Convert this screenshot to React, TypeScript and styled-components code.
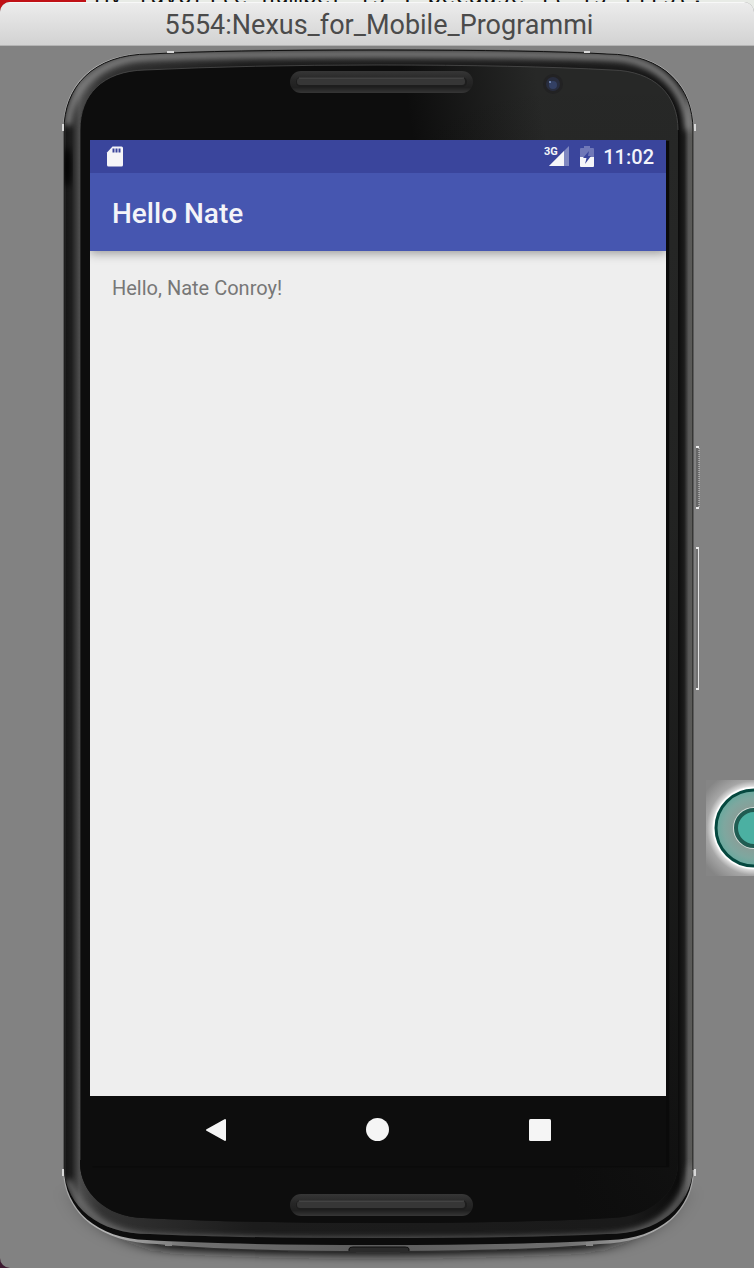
import React from "react";
import styled, { createGlobalStyle } from "styled-components";

const GlobalStyle = createGlobalStyle`
  *, *::before, *::after { box-sizing: border-box; }
  body { margin: 0; background: #e9e9e9; font-family: Roboto, "Liberation Sans", sans-serif; }
  p, h1 { margin: 0; }
`;

const Desktop = styled.div`
  display: flex;
  flex-direction: column;
  min-height: 100vh;
  overflow: hidden;
  background: linear-gradient(90deg, #c01116 0, #c01116 86px, #e8ebe6 86px) 0 0 / 100% 20px no-repeat #3c1a30;
`;

const BackdropStrip = styled.div`
  height: 2px;
  padding-left: 95px;
  overflow: hidden;
`;

const BackdropText = styled.p`
  margin-top: -16px;
  font: 23px/24px "DejaVu Sans Mono", "Liberation Mono", monospace;
  color: #111;
  white-space: nowrap;
`;

const EmulatorWindow = styled.main`
  display: flex;
  flex: 1;
  flex-direction: column;
  border-radius: 10px 10px 0 10px;
  overflow: hidden;
  background: #828282;
`;

const TitleBar = styled.header`
  display: flex;
  align-items: center;
  justify-content: center;
  height: 44px;
  border-top: 1px solid #f8f8f8;
  border-bottom: 1px solid #b4b4b4;
  padding: 2px 0 0 4px;
  background: linear-gradient(#ececec, #d2d2d2);
`;

const WindowTitle = styled.h1`
  font: 400 27px/32px Roboto, "Liberation Sans", sans-serif;
  color: #4b4b4b;
  white-space: nowrap;
`;

const Stage = styled.section`
  position: relative;
  display: flex;
  flex: 1;
  flex-direction: column;
  padding: 94px 88px 102px 90px;
`;

const DeviceArt = styled.svg`
  position: absolute;
  inset: 0;
  width: 100%;
  height: 100%;
`;

const Screen = styled.div`
  position: relative;
  display: flex;
  flex: 1;
  flex-direction: column;
  box-shadow: 3px 1px 1px #0a0a0a;
`;

const StatusBar = styled.div`
  display: flex;
  align-items: center;
  height: 33px;
  padding: 0 12px 0 16px;
  background: #3a459c;
  color: #f2f3fa;
`;

const StatusGroup = styled.div`
  display: flex;
  align-items: center;
  gap: 9px;
  margin-left: auto;
`;

const Clock = styled.time`
  font: 500 20px/24px Roboto, sans-serif;
`;

const AppBar = styled.div`
  position: relative;
  display: flex;
  align-items: center;
  height: 78px;
  padding: 4px 22px 0;
  background: #4656b0;
  color: #f4f4f8;
  box-shadow: 0 2px 10px rgba(0, 0, 0, 0.38);
  clip-path: inset(0 0 -20px 0);
`;

const AppTitle = styled.h2`
  margin: 0;
  font: 500 28px/32px Roboto, sans-serif;
`;

const Content = styled.div`
  flex: 1;
  padding: 25px 22px;
  background: #eee;
`;

const Greeting = styled.p`
  font: 400 20px/24px Roboto, sans-serif;
  color: #777;
`;

const NavBar = styled.nav`
  display: flex;
  align-items: center;
  justify-content: center;
  gap: 114px;
  height: 70px;
  padding-bottom: 2px;
  background: #0d0d0d;
`;

const NavButton = styled.button`
  display: flex;
  align-items: center;
  justify-content: center;
  width: 48px;
  height: 48px;
  border: 0;
  padding: 0;
  background: none;
  color: #f5f5f5;
`;

const Knob = styled.svg`
  position: absolute;
  top: 734px;
  right: 0;
`;

const BODY =
  "M64 130 C64 88 92 54 150 54 Q220 50 377 50 Q540 50 607 54 C665 54 693 88 693 130 V1170 C690 1206 660 1234 607 1234 Q520 1238 377 1238 Q230 1238 150 1234 C97 1234 67 1206 64 1170 Z";
const SHELL =
  "M63 130 C63 87 91 53 150 53 Q220 49 377 49 Q540 49 607 53 C666 53 694 87 694 130 V1172 C692 1214 656 1243 600 1244 Q520 1251 377 1251 Q230 1251 157 1244 C101 1243 65 1214 63 1172 Z";
const BAND =
  "M64 1168 C64 1210 98 1239 147 1240 Q230 1245 377 1245 Q530 1245 610 1240 C659 1239 693 1210 693 1168 Z";
const GLASS =
  "M80 130 C80 95 102 71 145 70 Q250 65 377 65 Q520 65 612 70 C655 71 678 95 678 130 V1163 C678 1192 652 1217 612 1218 Q520 1223 377 1223 Q240 1223 143 1218 C106 1217 80 1192 80 1163 Z";

function Speaker({ y }: { y: number }) {
  return (
    <g>
      <rect x="290" y={y} width="183" height="22" rx="11" fill="url(#speaker)" />
      <rect x="296" y={y + 6} width="171" height="10" rx="5" fill="#1d1d1d" />
      <rect x="297" y={y + 7} width="168" height="7" rx="3" fill="#363636" />
      <path d={`M299 ${y + 7}H464`} stroke="#505050" />
    </g>
  );
}

function Device() {
  return (
    <DeviceArt viewBox="0 46 754 1222" preserveAspectRatio="none" aria-hidden="true">
      <defs>
        <linearGradient id="speaker" x1="0" y1="0" x2="0" y2="1">
          <stop offset="0" stopColor="#363636" />
          <stop offset=".4" stopColor="#272727" />
          <stop offset=".75" stopColor="#202020" />
          <stop offset="1" stopColor="#363636" />
        </linearGradient>
        <linearGradient id="rim" gradientUnits="userSpaceOnUse" x1="64" y1="0" x2="693" y2="0">
          <stop offset="0" stopColor="#303030" />
          <stop offset=".004" stopColor="#161616" />
          <stop offset=".012" stopColor="#1e1e1e" />
          <stop offset=".024" stopColor="#4c4c4c" />
          <stop offset=".06" stopColor="#333" />
          <stop offset=".3" stopColor="#1c1c1c" />
          <stop offset=".9" stopColor="#1a1a1a" />
          <stop offset=".977" stopColor="#0c0c0c" />
          <stop offset=".986" stopColor="#1c1c1c" />
          <stop offset=".993" stopColor="#575757" />
          <stop offset="1" stopColor="#5c5c58" />
        </linearGradient>
        <linearGradient id="glass" gradientUnits="userSpaceOnUse" x1="410" y1="120" x2="540" y2="100">
          <stop offset="0" stopColor="#0d0d0d" />
          <stop offset="1" stopColor="#272827" />
        </linearGradient>
        <linearGradient id="glassFade" x1="0" y1="0" x2="0" y2="1">
          <stop offset="0" stopColor="#0d0d0d" stopOpacity="0" />
          <stop offset=".4" stopColor="#0d0d0d" stopOpacity=".2" />
          <stop offset=".9" stopColor="#0d0d0d" stopOpacity=".75" />
          <stop offset="1" stopColor="#0d0d0d" stopOpacity=".9" />
        </linearGradient>
        <linearGradient id="shell" x1="0" y1="0" x2="1" y2="0">
          <stop offset="0" stopColor="#a5a5a5" />
          <stop offset=".07" stopColor="#b5b5b5" />
          <stop offset=".2" stopColor="#707070" />
          <stop offset=".5" stopColor="#5c5c5c" />
          <stop offset=".8" stopColor="#707070" />
          <stop offset=".93" stopColor="#aaa" />
          <stop offset="1" stopColor="#a5a5a5" />
        </linearGradient>
        <filter id="soft" x="-20%" y="-50%" width="140%" height="200%">
          <feGaussianBlur stdDeviation="3" />
        </filter>
        <filter id="shadow" x="-20%" y="-80%" width="140%" height="260%">
          <feGaussianBlur stdDeviation="16 5" />
        </filter>
        <clipPath id="bodyClip">
          <path d={BODY} />
        </clipPath>
      </defs>

      <path d="M90 1190 Q95 1230 160 1250 Q377 1262 595 1250 Q662 1230 667 1190 Z" fill="#141414" filter="url(#shadow)" />
      <path d={SHELL} fill="url(#shell)" />
      <path d={BAND} fill="#0c0c0c" />
      <path d={BODY} fill="url(#rim)" />
      <g clipPath="url(#bodyClip)">
        <path
          d="M68 125 C70 92 96 58 150 57 Q220 54 377 54 Q540 54 607 57 C661 58 687 92 689 130"
          fill="none"
          stroke="#858585"
          strokeWidth="7"
          filter="url(#soft)"
        />
        <path
          d="M68 1180 C80 1210 105 1235 150 1237 Q230 1241 377 1241 Q530 1241 607 1237 C660 1233 686 1206 692 1165"
          fill="none"
          stroke="#707070"
          strokeWidth="6"
          filter="url(#soft)"
        />
        <ellipse cx="67" cy="167" rx="4" ry="20" fill="#050505" filter="url(#soft)" />
      </g>
      <path
        d="M64 1170 V130 C64 88 92 54 150 54 Q220 50 377 50 Q540 50 607 54 C665 54 693 88 693 130 V1170"
        fill="none"
        stroke="#121212"
      />
      <path d={GLASS} fill="url(#glass)" />
      <path d={GLASS} fill="url(#glassFade)" />
      <path
        d="M80 1160 V130 C80 95 102 71 145 70 Q250 65 377 65 Q520 65 612 70 C655 71 678 95 678 130"
        fill="none"
        stroke="#4c4c4c"
        strokeWidth=".8"
      />

      <Speaker y={71} />
      <Speaker y={1194} />

      <circle cx="553" cy="84" r="10" fill="#222223" />
      <circle cx="553" cy="84" r="7" fill="#282d3e" />
      <circle cx="553" cy="85" r="4" fill="#334064" />
      <circle cx="550" cy="82" r="1" fill="#8098c8" />

      <g fill="#d8d8d8">
        <rect x="167" y="51" width="7" height="2" />
        <rect x="584" y="51" width="6" height="2" />
        <rect x="62" y="124" width="2" height="7" />
        <rect x="694" y="124" width="2" height="7" />
        <rect x="62" y="1169" width="2" height="7" />
        <rect x="694" y="1169" width="2" height="7" />
      </g>
      <g fill="#858585">
        <rect x="165" y="1242" width="7" height="4" />
        <rect x="586" y="1242" width="7" height="4" />
      </g>
      <path d="M349 1251 V1249 Q349 1247 353 1247 H405 Q409 1247 409 1249 V1251 Z" fill="#2b2b2b" />
      <path d="M349 1251 V1249 Q349 1247 353 1247 H405 Q409 1247 409 1249 V1251" fill="none" stroke="#111" />

      <rect x="696" y="446" width="3" height="63" rx="1" fill="#666" />
      <path d="M699 448V508" stroke="#d2d2d2" strokeDasharray="1 1" />
      <rect x="696" y="547" width="2" height="143" rx="1" fill="#707070" />
      <rect x="698" y="548" width="1" height="142" fill="#e4e4e4" />
      <g fill="#eee">
        <rect x="696" y="446" width="3" height="2" />
        <rect x="696" y="507" width="3" height="2" />
        <rect x="696" y="547" width="3" height="2" />
        <rect x="696" y="688" width="3" height="2" />
      </g>
    </DeviceArt>
  );
}

function SdCardIcon() {
  return (
    <svg width="18" height="22" viewBox="0 0 18 22" aria-label="SD card">
      <path d="M6.5 0.500H15.500Q17 0.500 17 2V19Q17 20.500 15.500 20.500H2.500Q1 20.500 1 19V6.500Z" fill="#f5f5f8" />
      <path d="M7.500 2.500V6.500M10.500 2.500V6.500M13.500 2.500V6.500" stroke="#3a459c" strokeWidth="2" />
    </svg>
  );
}

function SignalIcon() {
  return (
    <svg width="25" height="22" viewBox="0 0 25 22" aria-label="3G signal">
      <path d="M25 0V20H5Z" fill="#7f87c0" />
      <path d="M20 5V20H5Z" fill="#f5f5f8" />
      <path d="M0 0H13V10H0Z" fill="#3a459c" />
      <text x="0" y="9" fontFamily="Roboto, sans-serif" fontSize="11" fontWeight="700" fill="#f5f5f8">
        3G
      </text>
    </svg>
  );
}

function BatteryIcon() {
  return (
    <svg width="16" height="22" viewBox="-2 0 16 22" aria-label="Battery charging">
      <path d="M4 0H10V2H13Q14 2 14 3V11H0V3Q0 2 1 2H4Z" fill="#7078b8" />
      <path d="M0 11H14V20Q14 21 13 21H1Q0 21 0 20Z" fill="#f5f5f8" />
      <path d="M9 5L3 12H6.500L5 18L11 10H8Z" fill="#3a459c" />
    </svg>
  );
}

function TouchKnob() {
  return (
    <Knob width="48" height="96" viewBox="0 0 48 96" aria-hidden="true">
      <defs>
        <radialGradient id="halo" gradientUnits="userSpaceOnUse" cx="48" cy="48" r="64">
          <stop offset=".63" stopColor="#fff" />
          <stop offset=".66" stopColor="#d8d8d8" />
          <stop offset=".74" stopColor="#a6a6a6" />
          <stop offset=".95" stopColor="#858585" />
        </radialGradient>
        <radialGradient id="ring" gradientUnits="userSpaceOnUse" cx="48" cy="48" r="40">
          <stop offset=".5" stopColor="#8a9e98" />
          <stop offset=".75" stopColor="#7ea79f" />
          <stop offset="1" stopColor="#62aa9e" />
        </radialGradient>
      </defs>
      <path d="M0 0H48V96H0Z" fill="url(#halo)" />
      <circle cx="48" cy="48" r="41" fill="#fff" />
      <circle cx="48" cy="48" r="38" fill="url(#ring)" stroke="#05483f" strokeWidth="3" />
      <circle cx="48" cy="48" r="21" fill="#d5dfdc" />
      <circle cx="48" cy="48" r="18" fill="#4bb0a2" stroke="#205c52" strokeWidth="4" />
    </Knob>
  );
}

export default function App() {
  return (
    <>
      <GlobalStyle />
      <Desktop>
        <BackdropStrip>
          <BackdropText>My favorite number is 1 because it is first.</BackdropText>
        </BackdropStrip>
        <EmulatorWindow>
          <TitleBar>
            <WindowTitle>5554:Nexus_for_Mobile_Programmi</WindowTitle>
          </TitleBar>
          <Stage>
            <Device />
            <Screen>
              <StatusBar>
                <SdCardIcon />
                <StatusGroup>
                  <SignalIcon />
                  <BatteryIcon />
                  <Clock>11:02</Clock>
                </StatusGroup>
              </StatusBar>
              <AppBar>
                <AppTitle>Hello Nate</AppTitle>
              </AppBar>
              <Content>
                <Greeting>Hello, Nate Conroy!</Greeting>
              </Content>
              <NavBar>
                <NavButton type="button" aria-label="Back">
                  <svg width="22" height="24" viewBox="0 0 22 24">
                    <path d="M2 12L20 2V22Z" fill="currentColor" stroke="currentColor" strokeWidth="2" strokeLinejoin="round" />
                  </svg>
                </NavButton>
                <NavButton type="button" aria-label="Home">
                  <svg width="24" height="24" viewBox="0 0 24 24">
                    <circle cx="11.500" cy="11.500" r="11.500" fill="currentColor" />
                  </svg>
                </NavButton>
                <NavButton type="button" aria-label="Recent apps">
                  <svg width="22" height="22" viewBox="0 0 22 22">
                    <rect width="22" height="22" rx="1.500" fill="currentColor" />
                  </svg>
                </NavButton>
              </NavBar>
            </Screen>
            <TouchKnob />
          </Stage>
        </EmulatorWindow>
      </Desktop>
    </>
  );
}
